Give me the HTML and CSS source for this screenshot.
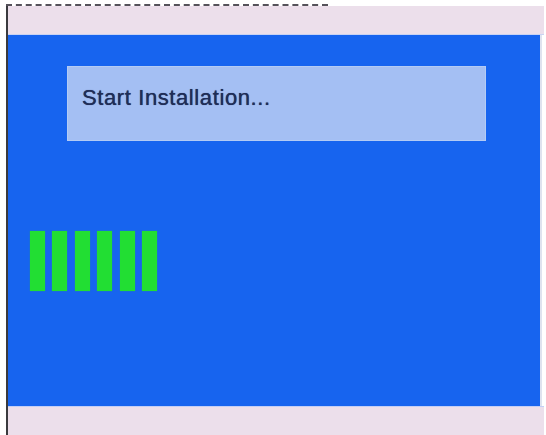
FILE: index.html
```html
<!DOCTYPE html>
<html>
<head>
<meta charset="utf-8">
<link rel="stylesheet" href="styles.css">
</head>
<body>
<div class="page">
  <div class="dash"></div>
  <div class="frame">
    <div class="band band-top"></div>
    <div class="screen">
      <div class="msg">Start Installation...</div>
      <div class="bars">
        <span class="bar"></span>
        <span class="bar"></span>
        <span class="bar"></span>
        <span class="bar"></span>
        <span class="bar"></span>
        <span class="bar"></span>
      </div>
    </div>
    <div class="band band-bottom"></div>
  </div>
</div>
</body>
</html>
```

FILE: styles.css
```css
html, body {
  margin: 0;
  padding: 0;
  background: #ffffff;
  width: 546px;
  height: 435px;
  overflow: hidden;
}

.page {
  padding-top: 4px;
  padding-left: 6px;
  font-family: "Liberation Sans", Arial, sans-serif;
}

.dash {
  width: 322px;
  height: 0;
  border-top: 2px dashed #55525a;
}

.frame {
  width: 536px;
  border-left: 2px solid #3a3a3e;
  display: flex;
  flex-direction: column;
  height: 429px;
}

.band {
  background: #ecdfeb;
  width: 536px;
}

.band-top {
  height: 28px;
  border-bottom: 1px solid #c9d3f3;
}

.band-bottom {
  flex: 1;
  border-top: 1px solid #c4cff5;
}

.screen {
  width: 534px;
  height: 371px;
  background: #1764ef;
  border-right: 2px solid #dfe3ef;
  padding-top: 31px;
  box-sizing: border-box;
}

.msg {
  margin-left: 59px;
  width: 419px;
  height: 75px;
  box-sizing: border-box;
  background: #a4bff3;
  border: 1px solid #b4cbf4;
  padding: 20px 0 0 14px;
  font-size: 22px;
  line-height: 22px;
  letter-spacing: 0.6px;
  color: #1f2d57;
  text-shadow: 0 0 0.7px #1f2d57;
}

.bars {
  display: flex;
  gap: 7.4px;
  margin-top: 90px;
  margin-left: 22px;
}

.bar {
  width: 15px;
  height: 60px;
  background: #22de33;
  box-shadow: 0 0 1px #2a9f6a;
}
```
